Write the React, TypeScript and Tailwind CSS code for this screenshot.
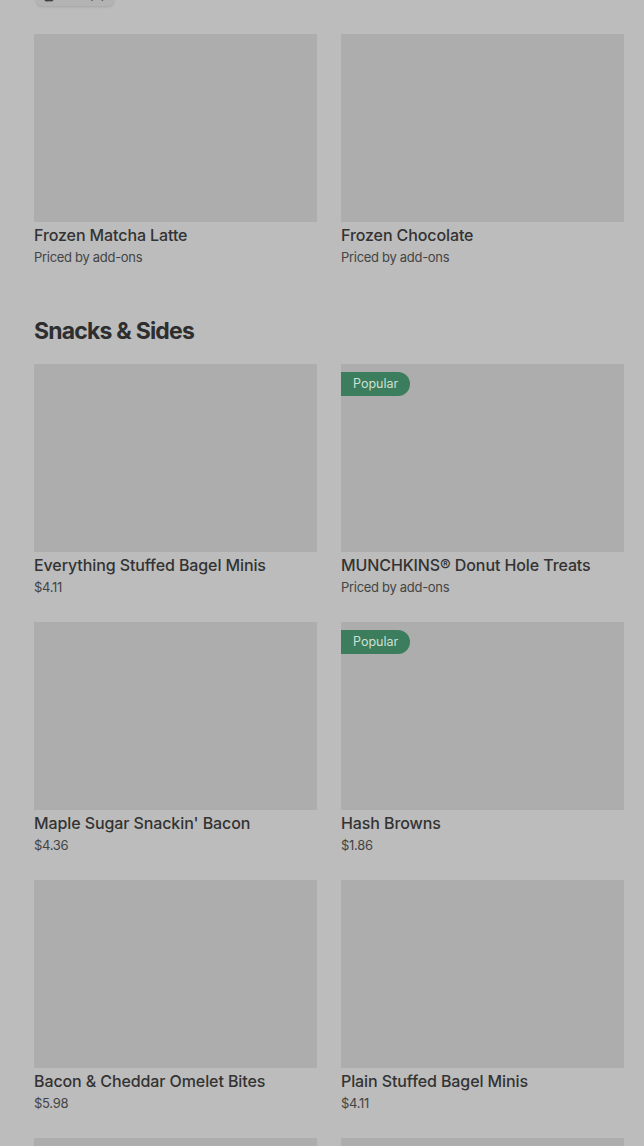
import { ThumbsUp } from "lucide-react";

type Item = { name: string; price: string; popular?: boolean };

const drinks: Item[] = [
  { name: "Frozen Matcha Latte", price: "Priced by add-ons" },
  { name: "Frozen Chocolate", price: "Priced by add-ons" },
];

const snacks: Item[] = [
  { name: "Everything Stuffed Bagel Minis", price: "$4.11" },
  { name: "MUNCHKINS® Donut Hole Treats", price: "Priced by add-ons", popular: true },
  { name: "Maple Sugar Snackin' Bacon", price: "$4.36" },
  { name: "Hash Browns", price: "$1.86", popular: true },
  { name: "Bacon & Cheddar Omelet Bites", price: "$5.98" },
  { name: "Plain Stuffed Bagel Minis", price: "$4.11" },
  { name: "Sausage, Egg & Cheese Wake-Up Wrap", price: "$3.49" },
  { name: "Hash Browns (Large)", price: "$2.49" },
];

function Card({ item }: { item: Item }) {
  return (
    <div className="flex flex-col">
      <div className="relative h-[188px] bg-[#adadad]">
        {item.popular && (
          <span className="absolute left-0 top-2 h-6 flex items-center pl-3 pr-3 rounded-r-full bg-[#3b7d5c] text-[12.5px] text-[#cfe0d6]">
            Popular
          </span>
        )}
      </div>
      <p className="mt-[1px] text-[16px] leading-6 font-medium tracking-[-0.1px] text-[#333]">{item.name}</p>
      <p className="text-[13px] leading-[21px] tracking-[-0.3px] text-[#444]">{item.price}</p>
    </div>
  );
}

export default function App() {
  return (
    <div
      className="min-h-screen bg-[#bcbcbc] pl-[34px] pr-[20px] overflow-hidden"
      style={{ fontFamily: "Inter, 'Noto Sans', sans-serif" }}
    >
      <div className="-mt-[14px] h-5 w-[78px] ml-[2px] rounded-md bg-[#b3b3b3] shadow-sm flex items-center gap-1 px-2 text-[12px] text-[#444]">
        <ThumbsUp size={11} fill="#444" strokeWidth={1.5} />
        <span>95% (4)</span>
      </div>

      <div className="mt-[28px] grid grid-cols-2 gap-x-6 gap-y-6">
        {drinks.map((d) => (
          <Card key={d.name} item={d} />
        ))}
      </div>

      <h2 className="mt-[47px] text-[23px] leading-8 font-bold tracking-[-0.8px] text-[#2e2e2e]">Snacks &amp; Sides</h2>

      <div className="mt-[17px] grid grid-cols-2 gap-x-6 gap-y-6">
        {snacks.map((d) => (
          <Card key={d.name} item={d} />
        ))}
      </div>
    </div>
  );
}
